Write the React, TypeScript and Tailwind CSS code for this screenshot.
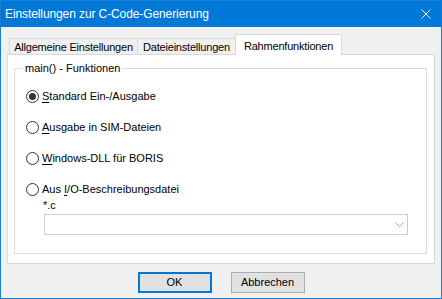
import React from "react";

function Radio({ checked, label, mnemonic, rest }: { checked?: boolean; label?: string; mnemonic: string; rest: string }) {
  return (
    <div className="flex items-center h-[13px]">
      <div className="w-[13px] h-[13px] rounded-full border border-[#333333] bg-white flex items-center justify-center shrink-0">
        {checked && <div className="w-[7px] h-[7px] rounded-full bg-[#333333]" />}
      </div>
      <span className="ml-[3px] text-[11px] leading-[13px] text-black whitespace-nowrap">
        {label}
        <span className="underline underline-offset-[2px]">{mnemonic}</span>
        {rest}
      </span>
    </div>
  );
}

export default function App() {
  return (
    <div
      className="w-[442px] h-[299px] bg-[#f0f0f0] border border-[#1a7fd4] flex flex-col text-black"
      style={{ fontFamily: '"Liberation Sans", Arial, sans-serif' }}
    >
      <div className="h-[26px] bg-[#0078d7] flex items-center pl-[4px] pr-[10px] text-white text-[12px] tracking-[-0.1px] shrink-0">
        <span className="flex-1 whitespace-nowrap">Einstellungen zur C-Code-Generierung</span>
        <svg width="10" height="10" viewBox="0 0 10 10" className="block">
          <path d="M0.5 0.5 L9.5 9.5 M9.5 0.5 L0.5 9.5" stroke="white" strokeWidth="1" fill="none" />
        </svg>
      </div>

      <div className="px-[6px] pt-[7px] shrink-0">
        <div className="flex items-end h-[21px] -mb-px pl-[2px] relative z-10 text-[11px] tracking-[-0.2px]">
          <div className="w-[129px] h-[16px] mb-px border border-b-0 border-[#d9d9d9] bg-[#f0f0f0] flex items-center justify-center whitespace-nowrap pt-[1px]">
            Allgemeine Einstellungen
          </div>
          <div className="w-[98px] h-[16px] mb-px border-t border-r border-[#d9d9d9] bg-[#f0f0f0] flex items-center justify-center whitespace-nowrap pt-[1px]">
            Dateieinstellungen
          </div>
          <div className="w-[107px] h-[21px] -ml-px border border-b-0 border-[#d9d9d9] bg-white flex items-start justify-center pt-[3px] whitespace-nowrap">
            Rahmenfunktionen
          </div>
        </div>
        <div className="h-[210px] border border-[#d9d9d9] bg-white pt-[13px] pl-[6px] pr-[7px] pb-[9px]">
          <div className="h-full border border-[#dcdcdc] relative pl-[11px] pt-[21px]">
            <span className="absolute -top-[7px] left-[8px] bg-white px-[2px] text-[11px] leading-[13px] whitespace-nowrap">
              main() - Funktionen
            </span>
            <div className="flex flex-col gap-[18px]">
              <Radio checked mnemonic="S" rest="tandard Ein-/Ausgabe" />
              <Radio mnemonic="A" rest="usgabe in SIM-Dateien" />
              <Radio mnemonic="W" rest="indows-DLL für BORIS" />
              <Radio label="Aus " mnemonic="I" rest="/O-Beschreibungsdatei" />
            </div>
            <div className="ml-[17px] mt-[3px] text-[11px] leading-[13px]">*.c</div>
            <div className="ml-[18px] mt-[2px] w-[364px] h-[21px] border border-[#cccccc] bg-white flex items-center justify-end pr-[3px]">
              <svg width="9" height="5" viewBox="0 0 9 5" className="block">
                <path d="M0.5 0.5 L4.5 4.5 L8.5 0.5" stroke="#a8a8a8" strokeWidth="1" fill="none" />
              </svg>
            </div>
          </div>
        </div>
      </div>

      <div className="mt-[8px] flex justify-center gap-[19px] shrink-0">
        <div className="w-[74px] h-[21px] border-2 border-[#0078d7] bg-[#e1e1e1] flex items-center justify-center text-[11px]">
          OK
        </div>
        <div className="w-[74px] h-[21px] border border-[#adadad] bg-[#e1e1e1] flex items-center justify-center text-[11px]">
          Abbrechen
        </div>
      </div>
    </div>
  );
}
